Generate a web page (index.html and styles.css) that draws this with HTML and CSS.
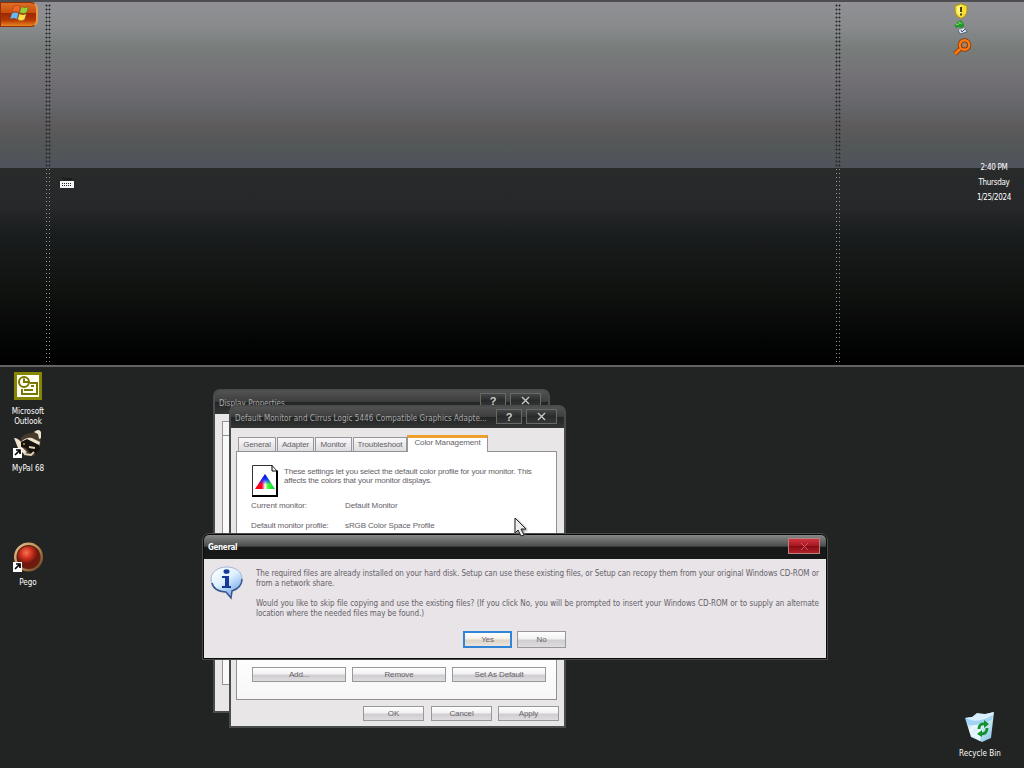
FILE: index.html
```html
<!DOCTYPE html>
<html lang="en">
<head>
<meta charset="utf-8">
<title>Desktop</title>
<link rel="stylesheet" href="styles.css">
</head>
<body>
<header class="taskbar">
  <button class="start" aria-label="Start">
    <svg width="20" height="18" viewBox="2 2 17 15"><g stroke="#713000" stroke-width=".3"><path fill="#ef652b" d="M6 4q3-2 6 0l-1.5 5q-3-2-6 0z"/><path fill="#8ed43f" d="M12.5 4q3 2 6 0L17 9q-3 2-6 0z"/><path fill="#67b7f6" d="M4.3 9.8q3-2 6 0L8.8 15q-3-2-6 0z"/><path fill="#ffe052" d="M10.8 10q3 2 6 0l-1.5 5q-3 2-6 0z"/></g></svg>
  </button>
  <i class="grip grip-left"></i>
  <svg class="keyboard" width="16" height="13" viewBox="0 0 16 13"><path d="M4 3V1M5 3h8" stroke="#111" fill="none"/><path fill="#f4f4f4" d="M1 5h14v7H1z"/><path stroke="#222" stroke-dasharray="1 1" d="M3 7.5h10M3 9.5h10"/></svg>
  <i class="grip grip-right"></i>
  <div class="tray">
    <svg width="18" height="16" viewBox="0 0 18 16"><path d="M9 .7l6 2.1v5q0 5-6 7.6-6-2.6-6-7.6v-5z" fill="#f5df32" stroke="#a78b16"/><path d="M5 4l4-2v11Q5 11 5 7z" fill="#fff485"/><path d="M9 4v5M9 10.5v2" stroke="#272400" stroke-width="1.7"/></svg>
    <svg width="18" height="16" viewBox="0 0 18 16"><path d="M2 6l3-1V3l4-2 3 4v3L9 9 7 8 4 9z" fill="#24962d"/><path d="M4 6l3-1V3l3 2" stroke="#73df62" fill="none"/><path d="M6 11l2 4 7-2-2-4" fill="#dce5ef" stroke="#536782"/><path d="M9 11l1 2 3-3" stroke="#42536b" fill="none"/></svg>
    <svg class="lens" width="20" height="18" viewBox="0 0 20 18"><path d="M8 11l-5 5" stroke="#873400" stroke-width="4.5"/><circle cx="12.5" cy="7" r="4.8" fill="none" stroke="#873400" stroke-width="4"/><path d="M8 11l-5 5" stroke="#ff7a11" stroke-width="2.8"/><circle cx="12.5" cy="7" r="4.8" fill="none" stroke="#ff7a11" stroke-width="2.4"/><circle cx="12.5" cy="7" r="1.5" fill="#e37924"/></svg>
  </div>
  <div class="clock"><span>2:40 PM</span><span>Thursday</span><span>1/25/2024</span></div>
</header>

<main class="desktop">
  <div class="shortcut outlook">
    <svg width="28" height="28" viewBox="0 0 28 28"><path fill="#878600" d="M0 0h28v28H0z"/><path fill="#fffff5" d="M3 3h22v22H3z"/><g fill="none" stroke="#777600" stroke-width="2"><circle cx="10" cy="10" r="5"/><path d="M10 6.5V10h4M8 17v5h15V11h-7M10 18h9M17 14h3"/></g></svg>
    <span>Microsoft<br>Outlook</span>
  </div>
  <div class="shortcut mypal">
    <svg width="32" height="30" viewBox="0 0 32 30"><path fill="#463b2d" d="M9 9q4-5 11-5l3-2 5 1 1 7-1 8-6 9-9-1-7-4z"/><path fill="#eee3cc" d="M2 9q4 0 7 4 5-5 11-4l8 4-1 4-7-3-6 3-4 1 5 5-3 2-6-6zM22 3q5-4 7 0v6l-2 1-1-5z"/><path fill="#17130f" d="M9 13l6-3 12 6 1 4-5 5-5-1-4-5-5-1z"/><path stroke="#ddd0b4" stroke-width="2" d="M12 25l7 1 3-3M17 18l6 1" fill="none"/><circle cx="12" cy="15" r="1" fill="#d28f3e"/><path d="M1 19h9v10H1z" fill="#fff"/><path d="M3 26l4-4M4 21h4v4" stroke="#000" stroke-width="1.7" fill="none"/></svg>
    <span>MyPal 68</span>
  </div>
  <div class="shortcut pego">
    <svg width="32" height="32" viewBox="0 0 32 32"><defs><radialGradient id="ball" cx=".4" cy=".3"><stop stop-color="#f47554"/><stop offset=".55" stop-color="#cd2e1c"/><stop offset="1" stop-color="#71180f"/></radialGradient><linearGradient id="ring" x2="1" y2="1"><stop stop-color="#e4c898"/><stop offset=".5" stop-color="#c0884e"/><stop offset="1" stop-color="#5e351c"/></linearGradient></defs><circle cx="16.5" cy="15" r="14.5" fill="url(#ring)"/><circle cx="16.5" cy="15" r="12" fill="#582414"/><circle cx="16.5" cy="15" r="10.8" fill="url(#ball)"/><path d="M1 20h9v10H1z" fill="#fff"/><path d="M3 27l4-4M4 22h4v4" stroke="#000" stroke-width="1.7" fill="none"/></svg>
    <span>Pego</span>
  </div>
  <div class="shortcut recycle">
    <svg width="32" height="34" viewBox="0 0 32 34"><defs><linearGradient id="bin" x2="1" y2="1"><stop stop-color="#5da6e8"/><stop offset=".4" stop-color="#eefaff"/><stop offset="1" stop-color="#78bce0"/></linearGradient></defs><path d="M1 8l14-2L30 2l-3 26-9 4-11-5z" fill="url(#bin)"/><path d="M1 8q11 4 15 2L30 2l-9 2-8-1-5 4z" fill="#d8f0ff"/><path d="M3 10q12 3 26-5l-1 5q-12 6-23 5z" fill="#a2d4f4"/><path d="M7 25l10-7-1 13z" fill="#e5faff"/><g fill="none" stroke="#12922c" stroke-width="2.8"><path d="M15 19q0-6 6-5M23 18q0 6-6 6"/></g><path fill="#12922c" d="M20 10l5 4-5 4zM18 20v7l-5-3z"/></svg>
    <span>Recycle Bin</span>
  </div>
</main>

<section class="window back">
  <div class="titlebar"><span>Display Properties</span><div class="caps"><b>?</b><b><svg width="9" height="9"><path d="M1 1l7 7M8 1L1 8"/></svg></b></div></div>
  <div class="client"><div class="back-tab"></div><div class="back-page"></div></div>
</section>

<section class="window monitor">
  <div class="titlebar"><span class="longtitle">Default Monitor and Cirrus Logic 5446 Compatible Graphics Adapte...</span><div class="caps"><b>?</b><b><svg width="9" height="9"><path d="M1 1l7 7M8 1L1 8"/></svg></b></div></div>
  <div class="client">
    <nav class="tabs"><span>General</span><span>Adapter</span><span>Monitor</span><span>Troubleshoot</span><span class="active">Color Management</span></nav>
    <div class="page">
      <div class="intro">
        <svg width="26" height="32" viewBox="0 0 26 32"><defs><linearGradient id="rg"><stop stop-color="#f00"/><stop offset=".35" stop-color="#f03"/><stop offset=".5" stop-color="#fff"/><stop offset=".65" stop-color="#4f2"/><stop offset="1" stop-color="#0c5"/></linearGradient><linearGradient id="bl" x2="0" y2="1"><stop stop-color="#00c"/><stop offset=".35" stop-color="#13f"/><stop offset=".7" stop-color="#13f" stop-opacity="0"/></linearGradient></defs><path fill="#fff" stroke="#333" d="M.5.5H20L25 6v25H.5z"/><path d="M20 0v6h6" fill="none" stroke="#000"/><path d="M25 6v25H0" fill="none" stroke="#000" stroke-width="2"/><path fill="url(#rg)" d="M13 9l10 15H3z"/><path fill="url(#bl)" d="M13 9l10 15H3z"/></svg>
        <p>These settings let you select the default color profile for your monitor. This<br>affects the colors that your monitor displays.</p>
      </div>
      <dl><dt>Current monitor:</dt><dd>Default Monitor</dd><dt>Default monitor profile:</dt><dd>sRGB Color Space Profile</dd></dl>
      <div class="profile-actions"><button>Add...</button><button>Remove</button><button>Set As Default</button></div>
    </div>
    <footer><button>OK</button><button>Cancel</button><button>Apply</button></footer>
  </div>
</section>

<section class="dialog">
  <div class="dialog-title"><span>General</span><b class="close"><svg width="9" height="7"><path d="M1 0l7 7M8 0L1 7"/></svg></b></div>
  <div class="dialog-body">
    <div class="message">
      <svg width="34" height="34" viewBox="0 0 34 34"><defs><linearGradient id="bubble" x2=".7" y2="1"><stop stop-color="#fff"/><stop offset=".5" stop-color="#dff0ff"/><stop offset="1" stop-color="#6da5e6"/></linearGradient></defs><path d="M17 1c9 0 15 5 15 12 0 6-4 10-10 12l-1 7-5-6C7 25 1 20 1 13 1 6 8 1 17 1z" fill="url(#bubble)" stroke="#a3b6d4"/><path d="M32 13c0 6-4 10-10 12l-1 7-5-6C8 26 3 22 2 17" fill="none" stroke="#37558f" stroke-width="1.5"/><ellipse cx="16.5" cy="5.5" rx="3" ry="2.3" fill="#173a98"/><path d="M12 10h7v10h2v2h-9v-2h3v-8h-3z" fill="#173a98"/></svg>
      <div class="copy"><p class="full">The required files are already installed on your hard disk. Setup can use these existing files, or Setup can recopy them from your original Windows CD-ROM or</p><p>from a network share.</p><p class="full gap">Would you like to skip file copying and use the existing files? (If you click No, you will be prompted to insert your Windows CD-ROM or to supply an alternate</p><p>location where the needed files may be found.)</p></div>
    </div>
    <div class="answers"><button class="primary">Yes</button><button>No</button></div>
  </div>
</section>
<svg class="cursor" width="14" height="20" viewBox="0 0 14 20"><path d="M1 1v15l3-3 3 6 3-1-3-6h5z" fill="#ececec" stroke="#222"/></svg>
</body>
</html>
```
FILE: styles.css
```css
* { box-sizing: border-box; }
body { margin: 0; width: 1024px; height: 768px; overflow: hidden; position: relative; background: #212422; color: #666168; font: 8px/10px "Liberation Sans", sans-serif; }
p, dl, dd { margin: 0; }
button { margin: 0; padding: 0; color: inherit; font: inherit; }
svg { display: block; flex: none; }
.taskbar { position: relative; height: 367px; border-top: 2px solid #4c4d51; border-bottom: 2px solid #626463; background: linear-gradient(#919195 0, #888a8c 25px, #777c7a 48px, #747176 75px, #64656a 105px, #5d5a5b 125px, #525758 144px, #50535b 166px, #292a2a 166px, #26282a 205px, #191c1c 235px, #101210 290px, #030404 340px, #000 363px); }
.grip { position: absolute; top: 2px; width: 6px; height: 360px; display: flex; flex-direction: column; }
.grip::before { content: ""; height: 164px; background: radial-gradient(circle at 1.5px 1.5px, #25272a 0 .7px, transparent 1.3px) 0 0 / 3px 4px; }
.grip::after { content: ""; flex: 1; background: radial-gradient(circle at 1.5px 1.5px, #929696 0 .5px, transparent 1px) 0 0 / 3px 4px; }
.grip-left { left: 45px; }
.grip-right { left: 835px; }
.keyboard { position: absolute; left: 59px; top: 174px; }
.tray { position: absolute; left: 952px; top: 1px; width: 20px; display: flex; flex-direction: column; }
.tray .lens { margin-top: 3px; }
.clock { position: absolute; left: 970px; top: 161px; width: 48px; display: flex; flex-direction: column; gap: 5px; text-align: center; color: #fff; font: 8px/10px "DejaVu Sans Condensed", sans-serif; letter-spacing: -.3px; }
.shortcut { position: absolute; width: 64px; display: flex; flex-direction: column; align-items: center; color: #fff; text-align: center; font: 8px/10px "DejaVu Sans Condensed", sans-serif; letter-spacing: -.05px; }
.outlook { left: -4px; top: 372px; }
.outlook span { margin-top: 7px; }
.mypal { left: -4px; top: 429px; }
.mypal span { margin-top: 5px; }
.pego { left: -4px; top: 542px; }
.pego span { margin-top: 4px; }
.recycle { left: 948px; top: 710px; }
.recycle span { margin-top: 5px; letter-spacing: .03px; }

.window { position: absolute; display: flex; flex-direction: column; border: 2px solid #4a4b4b; border-radius: 7px 7px 0 0; background: #444; }
.back { left: 213px; top: 389px; width: 337px; height: 324px; }
.monitor { left: 229px; top: 405px; width: 337px; height: 323px; }
.titlebar { height: 23px; display: flex; justify-content: space-between; align-items: center; padding: 0 7px 0 4px; border-radius: 5px 5px 0 0; background: linear-gradient(#525252, #3d3e3e 45%, #242525 50%, #343535); color: #aaa; white-space: nowrap; font: 8px/10px "DejaVu Sans Condensed", sans-serif; }
.titlebar > span { padding-top: 2px; letter-spacing: .04px; }
.caps { display: flex; gap: 4px; align-self: flex-start; margin-top: 2px; }
.caps b { height: 15px; width: 26px; display: flex; align-items: center; justify-content: center; border: 1px solid #686969; background: linear-gradient(#454646, #292a2a 50%, #363737); color: #ccc; font: bold 11px/12px "Liberation Sans", sans-serif; }
.caps b + b { width: 31px; }
.caps path { stroke: #ccc; stroke-width: 1.3; }
.client { flex: 1; display: flex; flex-direction: column; padding: 5px 7px 5px 5px; background: #e9e6e8; }
.back .client { padding: 7px 7px 26px; }
.back-tab { height: 14px; width: 40px; border: 1px solid #929295; border-bottom: 0; background: #f5f4f6; }
.back-page { flex: 1; border: 1px solid #929295; background: #fbfafb; }
.tabs { height: 18px; display: flex; align-items: flex-end; gap: 1px; padding-left: 2px; position: relative; z-index: 1; }
.tabs span { height: 14px; width: 38px; text-align: center; line-height: 13px; border: 1px solid #99979c; border-bottom: 0; background: linear-gradient(#f9f8fa, #dedcde); white-space: nowrap; letter-spacing: -.12px; }
.tabs span:nth-child(2) { width: 37px; }
.tabs span:nth-child(3) { width: 37px; }
.tabs span:nth-child(4) { width: 54px; }
.tabs .active { width: 81px; height: 17px; margin: 0 0 -1px -1px; border-top: 3px solid #eea02a; background: #fff; line-height: 10px; }
.page { height: 249px; display: flex; flex-direction: column; padding: 13px 10px 17px 15px; border: 1px solid #929096; background: linear-gradient(#fff, #fff 80%, #f8f7f8); }
.intro { display: flex; gap: 6px; height: 40px; }
.intro p { margin-top: 2px; line-height: 9px; white-space: nowrap; letter-spacing: -.175px; }
dl { display: grid; grid-template-columns: 94px 1fr; grid-auto-rows: 20px; line-height: 10px; margin-left: -1px; margin-top: -4px; letter-spacing: -.12px; }
dt, dd { white-space: nowrap; }
button { height: 15px; border: 1px solid #98979c; background: linear-gradient(#fefefe, #f2f1f2 48%, #cfcdd0 52%, #dedcdf); line-height: 12px; text-align: center; letter-spacing: -.12px; }
.start { display: flex; width: 38px; height: 25px; padding: 1px 0 0 8px; border: 1px solid #8d2f09; border-right: 2px solid #e49a51; border-radius: 0 7px 7px 0; background: linear-gradient(#df6e25, #c84d0e 42%, #9e2803 45%, #b63904 75%, #ed861f); }
.profile-actions { display: flex; gap: 6px; margin-top: auto; }
.profile-actions button { width: 94px; flex: none; }
footer { display: flex; justify-content: flex-end; gap: 6px; margin: 6px -2px 0 0; }
footer button { width: 61px; }
footer button:nth-child(2) { margin-left: 1px; }

.dialog { position: absolute; left: 202px; top: 533px; width: 626px; height: 127px; display: flex; flex-direction: column; border: 1px solid #4a4c4a; border-radius: 7px 7px 0 0; background: #090a0a; padding: 1px; }
.dialog-title { height: 24px; display: flex; justify-content: space-between; padding: 7px 6px 0 4px; border-radius: 5px 5px 0 0; background: linear-gradient(#868988, #4a4d4c 47%, #171918 50%, #171818); color: #fff; font: bold 8px/11px "DejaVu Sans Condensed", sans-serif; letter-spacing: -.35px; }
.close { width: 32px; height: 16px; margin-top: -4px; display: flex; align-items: center; justify-content: center; border: 1px solid #b98080; background: linear-gradient(#cf3440, #a61520 50%, #870b14 53%, #b22128); }
.close path { stroke: #d65d5d; }
.dialog-body { flex: 1; display: flex; flex-direction: column; padding: 7px 6px 0; background: #e8e4e7; }
.message { display: flex; gap: 12px; height: 65px; }
.copy { width: 563px; margin-top: 3px; font: 8px/10px "DejaVu Sans Condensed", sans-serif; letter-spacing: -.055px; white-space: nowrap; }
.full { text-align: justify; text-align-last: justify; }
.gap { margin-top: 10px; }
.answers { display: flex; gap: 5px; margin-left: 253px; }
.answers button { width: 49px; height: 17px; line-height: 14px; }
.answers .primary { border: 2px solid #3185d4; background: linear-gradient(#fff, #f8f0e5 48%, #ddd2c5 52%, #e9e5df); line-height: 12px; }
.cursor { position: absolute; left: 514px; top: 517px; filter: drop-shadow(1px 1px 1px #777); }
```
